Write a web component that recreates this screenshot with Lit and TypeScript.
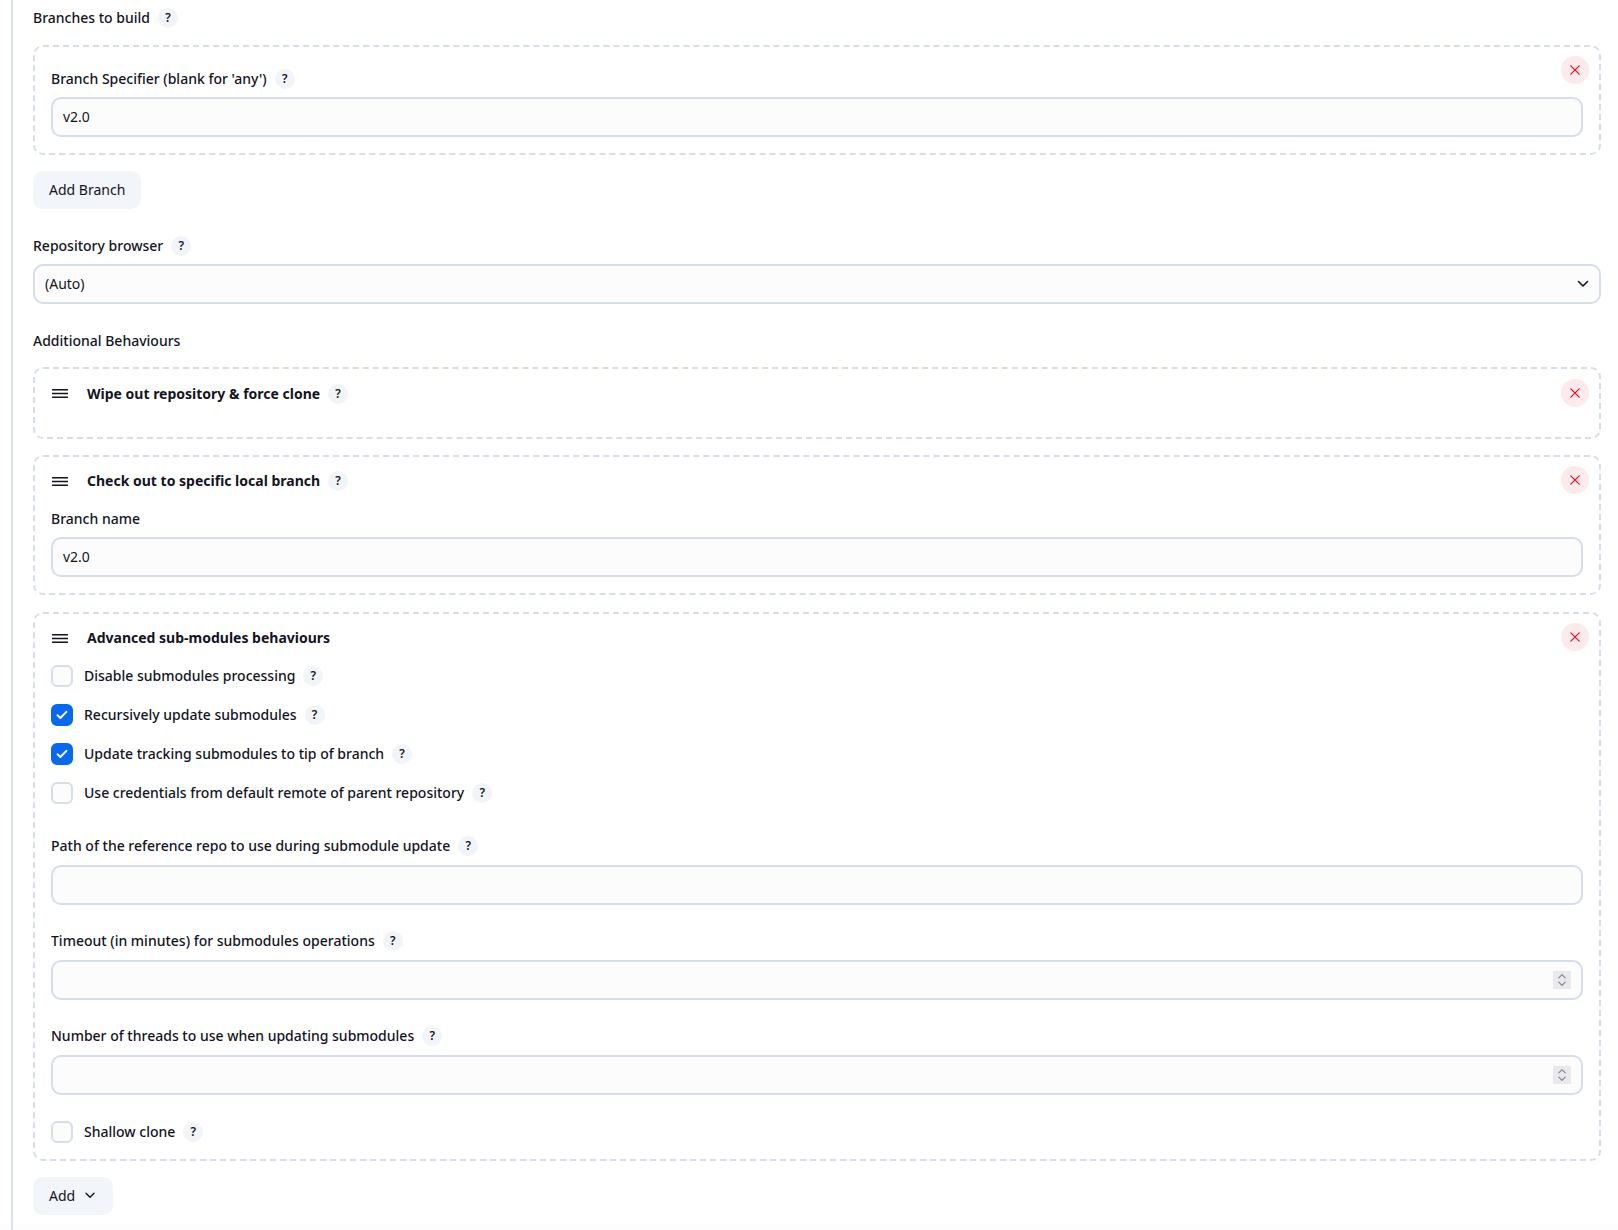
import { LitElement, html, css } from "lit";
import { customElement } from "lit/decorators.js";

const help = html`<span class="help">?</span>`;
const closeBtn = html`<button class="close" aria-label="Delete">
  <svg width="12" height="12" viewBox="0 0 12 12" fill="none" stroke="#f5001e" stroke-width="1.15" stroke-linecap="round"><path d="M1.8 1.8l8.4 8.4M10.2 1.8l-8.4 8.4"/></svg>
</button>`;
const handle = html`<svg class="handle" width="16" height="9" viewBox="0 0 16 9" fill="none" stroke="#14141f" stroke-width="1.4"><path d="M0 .8h16M0 4.5h16M0 8.2h16"/></svg>`;
const chev = html`<svg width="12" height="8" viewBox="0 0 12 8" fill="none" stroke="#14141f" stroke-width="1.6" stroke-linecap="round" stroke-linejoin="round"><path d="M1.5 1.5L6 6l4.5-4.5"/></svg>`;
const numberInput = html`<div class="num">
  <input class="input gap9" type="number" />
  <span class="spin"><svg width="10" height="14" viewBox="0 0 10 14" fill="none" stroke="#85858f" stroke-width="1.2" stroke-linecap="round" stroke-linejoin="round"><path d="M1.8 4.8L5 1.6l3.2 3.2M1.8 9.2L5 12.4l3.2-3.2"/></svg></span>
</div>`;

const check = (label: string, on = false) => html`
  <label class="check">
    <span class="box ${on ? "on" : ""}">
      ${on ? html`<svg width="12" height="10" viewBox="0 0 12 10" fill="none" stroke="#fff" stroke-width="1.9" stroke-linecap="round" stroke-linejoin="round"><path d="M1.5 5.2L4.4 8l6-6.2"/></svg>` : ""}
    </span>
    <span>${label}</span>${help}
  </label>`;

@customElement("app-root")
export class AppRoot extends LitElement {
  static styles = css`
    :host { display: block; width: 1618px; height: 1230px; overflow: hidden; color: #14141f;
      background: linear-gradient(#fff 1223px, #fdfdfd 1223px);
      font: 500 14px/20px "Noto Sans", sans-serif; }
    * { box-sizing: border-box; }
    .page { margin-left: 11px; border-left: 2px solid #d9e2ed; height: 1230px; padding: 8px 17px 0 20px; }
    .row { display: flex; align-items: center; gap: 8px; height: 20px; }
    .help { flex: none; width: 20px; height: 20px; border-radius: 50%; background: #f1f4f8; display: inline-flex; align-items: center; justify-content: center;
      font-size: 12px; font-weight: 600; line-height: 20px; color: #14141f; }
    .input { display: block; width: 100%; height: 40px; margin-top: 8px; padding: 0 10px 2px; border: 2px solid #d5deea; border-radius: 10px; background: #fcfcfd;
      font: 400 14px "Noto Sans", sans-serif; color: #14141f; outline: none; }
    .input.gap9 { margin-top: 9px; }
    input[type="number"] { appearance: textfield; }
    input[type="number"]::-webkit-inner-spin-button { display: none; }
    .num { position: relative; }
    .spin { position: absolute; right: 12px; bottom: 11px; width: 18px; height: 18px; background: #e9e9ed; display: flex; align-items: center; justify-content: center; }
    .dash { position: relative; border: 2px dashed #d5deea; border-radius: 10px; padding: 14px 16px 16px; }
    .close { position: absolute; top: 9px; right: 10px; width: 28px; height: 28px; padding: 0; border: 0; border-radius: 50%; background: #fdeaea; display: flex; align-items: center; justify-content: center; }
    .btn { display: flex; align-items: center; gap: 10px; width: fit-content; height: 38px; padding: 0 16px 2px; border: 0; border-radius: 10px; background: #f2f5f9;
      font: 400 14px "Noto Sans", sans-serif; color: #14141f; }
    .btn.add { padding-right: 18px; }
    .select { position: relative; margin-top: 8px; }
    .select select { appearance: none; margin: 0; }
    .select svg { position: absolute; right: 12px; top: 16px; pointer-events: none; }
    .title { display: flex; align-items: center; gap: 8px; height: 20px; font-weight: 700; }
    .handle { margin: 0 11px 0 1px; flex: none; }
    .check { display: flex; align-items: center; height: 22px; gap: 8px; }
    .check + .check, .title + .check { margin-top: 17px; }
    .box { flex: none; width: 22px; height: 22px; margin-right: 3px; border: 2px solid #d5deea; border-radius: 6px; background: #fcfcfd; display: flex; align-items: center; justify-content: center; }
    .box.on { background: #0669f0; border-color: #0669f0; }
    .branches { margin-top: 17px; padding-top: 22px; }
    .wipe { height: 72px; padding-top: 15px; }
    .wipe .close { top: 10px; }
    .wipe .handle { margin-bottom: 2px; }
    .mt16 { margin-top: 16px; }
    .mt17 { margin-top: 17px; }
    .mt18 { margin-top: 18px; }
    .mt26 { margin-top: 26px; }
    .mt27 { margin-top: 27px; }
    .mt32 { margin-top: 32px; }
  `;

  render() {
    return html`<div class="page">
      <div class="row">Branches to build ${help}</div>

      <div class="dash branches">
        ${closeBtn}
        <div class="row">Branch Specifier (blank for 'any') ${help}</div>
        <input class="input" value="v2.0" />
      </div>
      <button class="btn mt16">Add Branch</button>

      <div class="row mt27">Repository browser ${help}</div>
      <div class="select">
        <select class="input"><option>(Auto)</option></select>
        ${chev}
      </div>

      <div class="row mt27">Additional Behaviours</div>

      <div class="dash wipe mt16">
        ${closeBtn}
        <div class="title">${handle}Wipe out repository &amp; force clone ${help}</div>
      </div>

      <div class="dash mt16">
        ${closeBtn}
        <div class="title">${handle}Check out to specific local branch ${help}</div>
        <div class="row mt18">Branch name</div>
        <input class="input" value="v2.0" />
      </div>

      <div class="dash mt17">
        ${closeBtn}
        <div class="title">${handle}Advanced sub-modules behaviours</div>
        ${check("Disable submodules processing")}
        ${check("Recursively update submodules", true)}
        ${check("Update tracking submodules to tip of branch", true)}
        ${check("Use credentials from default remote of parent repository")}
        <div class="row mt32">Path of the reference repo to use during submodule update ${help}</div>
        <input class="input gap9" />
        <div class="row mt26">Timeout (in minutes) for submodules operations ${help}</div>
        ${numberInput}
        <div class="row mt26">Number of threads to use when updating submodules ${help}</div>
        ${numberInput}
        <div class="mt26">${check("Shallow clone")}</div>
      </div>
      <button class="btn add mt16">Add <svg width="10" height="7" viewBox="0 0 10 7" fill="none" stroke="#14141f" stroke-width="1.4" stroke-linecap="round" stroke-linejoin="round"><path d="M1 1.2L5 5.2l4-4"/></svg></button>
    </div>`;
  }
}
